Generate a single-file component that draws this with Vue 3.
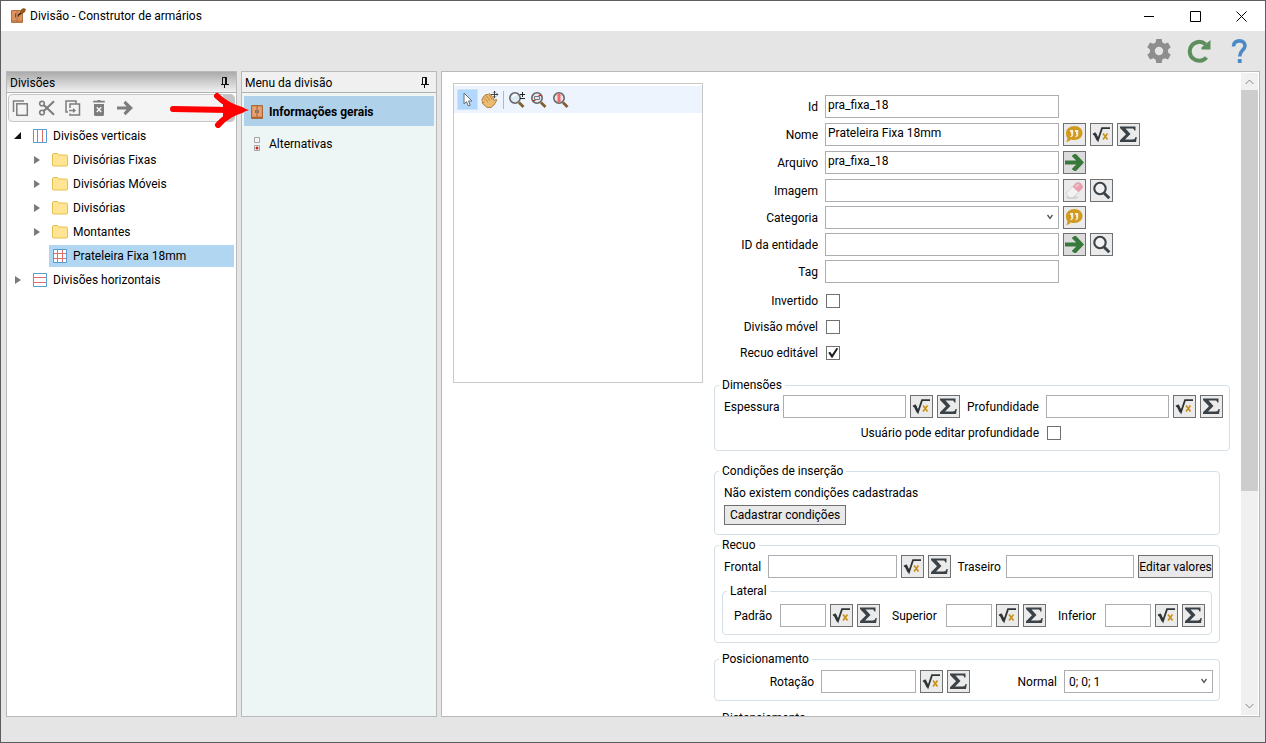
<script setup>
import { ref } from 'vue'

const folders = ['Divisórias Fixas', 'Divisórias Móveis', 'Divisórias', 'Montantes']

const topFields = ref([
  { id: 'id', label: 'Id', value: 'pra_fixa_18', actions: [] },
  { id: 'nome', label: 'Nome', value: 'Prateleira Fixa 18mm', actions: ['quote', 'fx', 'sum'] },
  { id: 'arquivo', label: 'Arquivo', value: 'pra_fixa_18', actions: ['go'] },
  { id: 'imagem', label: 'Imagem', value: '', actions: ['eraser', 'search'] },
])
const bottomFields = ref([
  { id: 'categoria', label: 'Categoria', value: '', select: true, actions: ['quote'] },
  { id: 'entidade', label: 'ID da entidade', value: '', actions: ['go', 'search'] },
  { id: 'tag', label: 'Tag', value: '', actions: [] },
])
const checks = ref([
  { id: 'invertido', label: 'Invertido', on: false },
  { id: 'movel', label: 'Divisão móvel', on: false },
  { id: 'recuo', label: 'Recuo editável', on: true },
])
const names = {
  quote: 'Tradução',
  fx: 'Fórmula',
  sum: 'Somatório',
  go: 'Abrir',
  eraser: 'Limpar',
  search: 'Pesquisar',
}
const treeTools = ['copy', 'cut', 'paste', 'trash', 'arrow']
const treeToolNames = ['Copiar', 'Recortar', 'Colar', 'Excluir', 'Avançar']
const editDepth = ref(false)
</script>

<template>
  <div class="window">
    <svg class="defs" aria-hidden="true">
      <symbol id="i-quote" viewBox="0 0 21 21">
        <path d="M10.5 2C15 2 18.500 5 18.500 9S15 16 10.500 16C9 16 7.800 15.800 6.800 15.400C5.500 16.800 4 17.800 2 18C3 17 3.400 15.800 3.400 14C2.400 12.600 2 11 2 9C2 5 6 2 10.500 2Z" fill="#d29a1e" />
        <path d="M6 6H9.200V10.500C9.200 12 8.300 13 6.500 13.300V12C7.300 11.800 7.600 11.300 7.600 10.300H7V8H6ZM11 6H14.200V10.500C14.200 12 13.300 13 11.500 13.300V12C12.300 11.800 12.600 11.300 12.600 10.300H12V8H11Z" fill="#f6efdc" />
      </symbol>
      <symbol id="i-fx" viewBox="0 0 21 21">
        <path d="M2 10.500l2-1 3 6.500L11 4.200h8" fill="none" stroke="#2f3437" stroke-width="1.800" />
        <path d="M3.800 9.600l3 6.400" stroke="#2f3437" stroke-width="2.600" />
        <path d="M12 9.500l4.500 6M16.500 9.500l-4.500 6" stroke="#c8921a" stroke-width="1.700" />
      </symbol>
      <symbol id="i-sum" viewBox="0 0 21 21">
        <path d="M2 2.500H17.500V6.500H16.300C16 5 15.400 4.500 14 4.500H7.500L12.500 10L7 15.500H14.500C16.300 15.500 17 14.800 17.500 13H18.800L18 18H2V16.300L8 10.300L2 4Z" fill="#3b4349" />
      </symbol>
      <symbol id="i-go" viewBox="0 0 21 21">
        <path d="M1 8.400H12.200L7.700 4L10.300 2H12L20 10.500L12 19H10.300L7.700 17L12.200 12.600H1Z" fill="#37793a" />
      </symbol>
      <symbol id="i-eraser" viewBox="0 0 21 21">
        <ellipse cx="8" cy="17.500" rx="6.500" ry="1.500" fill="#cfcfcf" />
        <path d="M3 12L12 3.300C13.500 2 15 2 16.500 3.300L18 5C19 6.300 19 7.500 18 8.700L9.500 17C8 18.200 6.500 18 5 17L3.400 15.500C2.300 14.500 2.200 13 3 12Z" fill="#f2f2f2" stroke="#c9c6c7" stroke-width=".7" />
        <path d="M8.500 6.700L12 3.300C13.500 2 15 2 16.500 3.300L18 5C19 6.300 19 7.500 18 8.700L14.400 12.200Z" fill="#eaa0ae" />
        <path d="M11 6.500l2.500-2.400 2 .3-3 3.200Z" fill="#f5c5cc" />
      </symbol>
      <symbol id="i-search" viewBox="0 0 21 21">
        <circle cx="9" cy="8.500" r="5.700" fill="#f1f1f1" stroke="#3b4349" stroke-width="2.100" />
        <path d="M13 13l5.300 5.200" stroke="#3b4349" stroke-width="3" />
      </symbol>
      <symbol id="i-copy" viewBox="0 0 18 18">
        <path d="M1.500 13V2H12" fill="none" stroke="#7d7d7d" stroke-width="1.500" />
        <rect x="4.800" y="4.800" width="10.500" height="11.500" fill="none" stroke="#7d7d7d" stroke-width="1.500" />
      </symbol>
      <symbol id="i-cut" viewBox="0 0 18 18">
        <circle cx="4" cy="4.500" r="2.300" fill="none" stroke="#7d7d7d" stroke-width="1.600" />
        <circle cx="4" cy="13.500" r="2.300" fill="none" stroke="#7d7d7d" stroke-width="1.600" />
        <path d="M5.500 5.800L16 15.800M5.500 12.200L16 2.200" stroke="#7d7d7d" stroke-width="2.100" />
      </symbol>
      <symbol id="i-paste" viewBox="0 0 18 18">
        <path d="M4 13H2V2H12V4.500M6 9V5H15.500V16H6V14.500M5 11.500H10" fill="none" stroke="#7d7d7d" stroke-width="1.500" />
        <path d="M9 9l3 2.500-3 2.500Z" fill="#7d7d7d" />
      </symbol>
      <symbol id="i-trash" viewBox="0 0 18 18">
        <path d="M3.200 1.700H7L8 1H10L11 1.700H14.800V3.500H3.200ZM4 5H14V15.500Q14 17 12.500 17H5.500Q4 17 4 15.500Z" fill="#7d7d7d" />
        <path d="M6.800 8.200l4.400 4.800M11.200 8.200l-4.400 4.800" stroke="#f4f4f4" stroke-width="1.500" />
      </symbol>
      <symbol id="i-arrow" viewBox="0 0 18 18">
        <path d="M1 7.500H10.500L7.500 4L9.500 1.800L17 9L9.500 16.200L7.500 14L10.500 10.500H1Z" fill="#7d7d7d" />
      </symbol>
      <symbol id="i-pin" viewBox="0 0 8 11">
        <path d="M1.500 7V.5H5.500V7M0 7.500H8M3.500 8V11" fill="none" stroke="#111" />
        <path d="M5 .5V7" stroke="#111" stroke-width="2" />
      </symbol>
      <symbol id="i-folder" viewBox="0 0 16 14">
        <path d="M.5 2Q.5 .5 2 .5H5.500L7 2H14Q15.500 2 15.500 3.500V12Q15.500 13 14.500 13H1.500Q.5 13 .5 12Z" fill="#ffe593" stroke="#e6bf50" />
      </symbol>
      <symbol id="i-cabinet" viewBox="0 0 12 14">
        <path d="M.5 .5H11.500V13.500H.5Z" fill="#d98d58" stroke="#a9693a" />
        <path d="M1.500 2H5.500V11H1.500ZM6.500 2H10.500V11H6.500Z" fill="#e8a070" />
        <path d="M6 1V12M0 12.500H12" stroke="#9c6036" stroke-width=".8" />
        <path d="M4.800 5v3M7.200 5v3" stroke="#4f6470" stroke-width="1" />
      </symbol>
    </svg>

    <header class="titlebar">
      <svg class="app-icon" viewBox="0 0 16 16">
        <path d="M1.500 2.500H12.500V14.500H1.500Z" fill="#dd935f" stroke="#b8743f" />
        <path d="M7 3V14M1 13H13" stroke="#a9673a" stroke-width=".8" />
        <path d="M5.500 5.500v4M8.500 6v3" stroke="#675548" stroke-width="1.100" />
        <path d="M9 6.500L11.500 1L14 0L16 1.500L15 4L11.500 6.500Z" fill="#97581b" />
        <path d="M8 7.500l3-2.500" stroke="#302218" stroke-width="1.300" />
      </svg>
      <h1>Divisão - Construtor de armários</h1>
      <nav class="caption">
        <button aria-label="Minimizar"><svg viewBox="0 0 11 11"><path d="M0 5.500H10" /></svg></button>
        <button aria-label="Maximizar"><svg viewBox="0 0 11 11"><path d="M.5 .5H10.500V10.500H.5Z" /></svg></button>
        <button aria-label="Fechar"><svg viewBox="0 0 11 11"><path d="M.5 .5L10.500 10.500M10.500 .5L.5 10.500" /></svg></button>
      </nav>
    </header>

    <div class="commands">
      <button aria-label="Configurações">
        <svg viewBox="0 0 24 24"><path fill="#8e8e8e" fill-rule="evenodd" d="M9.300 0H14.700L15.400 3.400L17.700 4.700L21 3.600L23.700 8.300L21.100 10.600V13.400L23.700 15.700L21 20.400L17.700 19.300L15.400 20.600L14.700 24H9.300L8.600 20.600L6.300 19.300L3 20.400L.3 15.700L2.900 13.400V10.600L.3 8.300L3 3.600L6.300 4.700L8.600 3.400ZM12 7.800A4.200 4.200 0 1 0 12 16.200A4.200 4.200 0 1 0 12 7.800Z" /></svg>
      </button>
      <button aria-label="Atualizar">
        <svg viewBox="0 0 24 24">
          <path d="M19.500 18.500A9.500 9.500 0 1 1 18.500 5.200" fill="none" stroke="#5c8f5c" stroke-width="4" />
          <path d="M23.500 1V10.500H14.500V8.500Z" fill="#5c8f5c" />
        </svg>
      </button>
      <button aria-label="Ajuda">
        <svg viewBox="0 0 24 24">
          <path d="M6.500 7.500C6.500 3.500 9 1.900 12.500 1.900C16 1.900 18 4 18 6.700C18 11 12.700 11.500 12.700 17.500" fill="none" stroke="#4a8ac6" stroke-width="3.600" />
          <path d="M10.800 20H14.600V24H10.800Z" fill="#4a8ac6" />
        </svg>
      </button>
    </div>

    <main class="panels">
      <section class="panel tree-panel">
        <div class="panel-head active">
          <h2>Divisões</h2>
          <svg class="pin"><use href="#i-pin" /></svg>
        </div>
        <div class="tree-tools">
          <button v-for="(t, i) in treeTools" :key="t" :aria-label="treeToolNames[i]">
            <svg><use :href="'#i-' + t" /></svg>
          </button>
          <span class="overflow"></span>
        </div>
        <ul class="tree">
          <li>
            <div class="node">
              <svg class="twist" viewBox="0 0 8 8"><path d="M7 0V7H0Z" fill="#111" /></svg>
              <svg class="grid-icon" viewBox="0 0 14 14"><path d="M4.500 1V13M9.500 1V13" stroke="#e06c6c" /><path d="M.5 .5H13.500V13.500H.5Z" fill="none" stroke="#5a9bd0" /></svg>
              <span>Divisões verticais</span>
            </div>
            <ul>
              <li v-for="f in folders" :key="f" class="node">
                <svg class="twist" viewBox="0 0 8 8"><path d="M1 0L7 4L1 8Z" fill="#7a7a7a" /></svg>
                <svg class="folder"><use href="#i-folder" /></svg>
                <span>{{ f }}</span>
              </li>
              <li class="node selected">
                <svg class="grid-icon" viewBox="0 0 14 14"><path d="M.5 .5H13.500V13.500H.5Z" fill="#fff" stroke="#5a9bd0" /><path d="M4.500 1V13M9.500 1V13M1 4.500H13M1 9.500H13" stroke="#e06c6c" /></svg>
                <span>Prateleira Fixa 18mm</span>
              </li>
            </ul>
          </li>
          <li class="node">
            <svg class="twist" viewBox="0 0 8 8"><path d="M1 0L7 4L1 8Z" fill="#7a7a7a" /></svg>
            <svg class="grid-icon" viewBox="0 0 14 14"><path d="M1 4.500H13M1 9.500H13" stroke="#e06c6c" /><path d="M.5 .5H13.500V13.500H.5Z" fill="none" stroke="#5a9bd0" /></svg>
            <span>Divisões horizontais</span>
          </li>
        </ul>
      </section>

      <section class="panel menu-panel">
        <div class="panel-head">
          <h2>Menu da divisão</h2>
          <svg class="pin"><use href="#i-pin" /></svg>
        </div>
        <nav class="menu">
          <button class="current"><svg><use href="#i-cabinet" /></svg>Informações gerais</button>
          <button>
            <svg viewBox="0 0 12 14"><path d="M3.500 .5H8.500V5.500H3.500ZM3.500 8.500H8.500V13.500H3.500Z" fill="#f4f4f4" stroke="#a5a5a5" /><circle cx="6" cy="11" r="1.500" fill="#c22626" /></svg>Alternativas
          </button>
        </nav>
      </section>

      <section class="panel content-panel">
        <div class="content">
          <div class="preview">
            <div class="preview-tools">
              <button class="on" aria-label="Selecionar">
                <svg viewBox="0 0 18 18"><path d="M5 2V13L7.500 10.700L9.300 15L11.300 14.200L9.500 10H13Z" fill="#fff" stroke="#66707c" /></svg>
              </button>
              <button aria-label="Mover">
                <svg viewBox="0 0 18 18">
                  <path d="M1 8L3 5L5 3.500L7 3.500L8 2.500L10 4L12 6.500L13 9.500L15 8.500L16 9L13 14L10 16.500H6L3 14L1 11.500L2.500 11.500L1 9.500Z" fill="#ebbc70" stroke="#a36d25" stroke-width=".8" />
                  <path d="M3 6.500l4 4.500M5 4.500l4 5M8 3.500l3 5" stroke="#b47c32" stroke-width=".8" />
                  <path d="M13.500 0V7M10 3.500H17M12.300 1.500L13.500 .3L14.700 1.500M12.300 5.500L13.500 6.700L14.700 5.500M15.700 2.300L16.900 3.500L15.700 4.700" fill="none" stroke="#333" stroke-width=".9" />
                </svg>
              </button>
              <i></i>
              <button aria-label="Zoom">
                <svg viewBox="0 0 18 18">
                  <path d="M11 11.500L15.500 16" stroke="#80602e" stroke-width="2.800" />
                  <circle cx="7" cy="7" r="5.200" fill="#dcebf0" stroke="#666" stroke-width="1.600" />
                  <path d="M4.500 6Q6 3.500 8.500 4" fill="none" stroke="#fff" stroke-width="1.500" />
                  <path d="M14.500 1V6M12 3.500H17M12 7.500H17" stroke="#222" />
                </svg>
              </button>
              <button aria-label="Zoom na área">
                <svg viewBox="0 0 18 18">
                  <path d="M11 11.500L15.500 16" stroke="#80602e" stroke-width="2.800" />
                  <circle cx="7" cy="7" r="5.200" fill="#e6eaf0" stroke="#666" stroke-width="1.600" />
                  <path d="M4.500 5.500H9.500V8.500H4.500Z" fill="none" stroke="#777" />
                  <path d="M8.500 4.500h2.500M2.500 9.500h3" stroke="#d22" stroke-width="1.200" />
                </svg>
              </button>
              <button aria-label="Ajustar zoom">
                <svg viewBox="0 0 18 18">
                  <path d="M11 11.500L15.500 16" stroke="#80602e" stroke-width="2.800" />
                  <circle cx="7" cy="7" r="5.200" fill="#e6eaf0" stroke="#666" stroke-width="1.600" />
                  <path d="M7 2L9.500 4.500H8.500V9.500H9.500L7 12L4.500 9.500H5.500V4.500H4.500Z" fill="#f76666" />
                </svg>
              </button>
            </div>
          </div>

          <form class="form" @submit.prevent>
            <div class="rows loose">
              <div v-for="f in topFields" :key="f.id" class="field">
                <label :for="f.id">{{ f.label }}</label>
                <input :id="f.id" v-model="f.value" type="text" />
                <div class="acts">
                  <button v-for="a in f.actions" :key="a" class="ib" :class="a" :aria-label="names[a]"><svg><use :href="'#i-' + a" /></svg></button>
                </div>
              </div>
            </div>
            <div class="rows tight">
              <div v-for="f in bottomFields" :key="f.id" class="field">
                <label :for="f.id">{{ f.label }}</label>
                <div v-if="f.select" class="pick">
                  <select :id="f.id"><option></option></select>
                  <svg viewBox="0 0 8 6"><path d="M1.500 1L4 4.500L6.500 1" /></svg>
                </div>
                <input v-else :id="f.id" v-model="f.value" type="text" />
                <div class="acts">
                  <button v-for="a in f.actions" :key="a" class="ib" :class="a" :aria-label="names[a]"><svg><use :href="'#i-' + a" /></svg></button>
                </div>
              </div>
            </div>
            <div class="checks">
              <div v-for="c in checks" :key="c.id" class="field">
                <label :for="c.id">{{ c.label }}</label>
                <input :id="c.id" v-model="c.on" type="checkbox" />
              </div>
            </div>

            <fieldset class="dimensions">
              <legend>Dimensões</legend>
              <div class="line">
                <label class="w-label" for="esp">Espessura</label>
                <input id="esp" type="text" />
                <button class="ib" aria-label="Fórmula"><svg><use href="#i-fx" /></svg></button>
                <button class="ib" aria-label="Somatório"><svg><use href="#i-sum" /></svg></button>
                <label class="w-depth" for="prof">Profundidade</label>
                <input id="prof" type="text" />
                <button class="ib" aria-label="Fórmula"><svg><use href="#i-fx" /></svg></button>
                <button class="ib" aria-label="Somatório"><svg><use href="#i-sum" /></svg></button>
              </div>
              <div class="line depth-check">
                <label for="editdepth">Usuário pode editar profundidade</label>
                <input id="editdepth" v-model="editDepth" type="checkbox" />
              </div>
            </fieldset>

            <fieldset class="narrow conditions">
              <legend>Condições de inserção</legend>
              <p>Não existem condições cadastradas</p>
              <button class="tb">Cadastrar condições</button>
            </fieldset>

            <fieldset class="narrow setback">
              <legend>Recuo</legend>
              <div class="line">
                <label class="w-front" for="frontal">Frontal</label>
                <input id="frontal" type="text" />
                <button class="ib" aria-label="Fórmula"><svg><use href="#i-fx" /></svg></button>
                <button class="ib" aria-label="Somatório"><svg><use href="#i-sum" /></svg></button>
                <label class="w-back" for="traseiro">Traseiro</label>
                <input id="traseiro" type="text" />
                <button class="tb fit">Editar valores</button>
              </div>
              <fieldset class="lateral">
                <legend>Lateral</legend>
                <div class="line">
                  <template v-for="l in ['Padrão', 'Superior', 'Inferior']" :key="l">
                    <label :for="'lat-' + l" :class="'l-' + l.slice(0, 3).toLowerCase()">{{ l }}</label>
                    <input :id="'lat-' + l" type="text" />
                    <button class="ib" aria-label="Fórmula"><svg><use href="#i-fx" /></svg></button>
                    <button class="ib" aria-label="Somatório"><svg><use href="#i-sum" /></svg></button>
                  </template>
                </div>
              </fieldset>
            </fieldset>

            <fieldset class="narrow position">
              <legend>Posicionamento</legend>
              <div class="line">
                <label class="w-rot" for="rotacao">Rotação</label>
                <input id="rotacao" type="text" />
                <button class="ib" aria-label="Fórmula"><svg><use href="#i-fx" /></svg></button>
                <button class="ib" aria-label="Somatório"><svg><use href="#i-sum" /></svg></button>
                <label class="w-normal" for="normal">Normal</label>
                <div class="pick">
                  <select id="normal"><option>0; 0; 1</option></select>
                  <svg viewBox="0 0 8 6"><path d="M1.500 1L4 4.500L6.500 1" /></svg>
                </div>
              </div>
            </fieldset>

            <fieldset class="narrow distance">
              <legend>Distanciamento</legend>
            </fieldset>
          </form>
        </div>
        <div class="scrollbar" aria-hidden="true">
          <svg viewBox="0 0 9 6"><path d="M.7 5L4.500 1L8.300 5" /></svg>
          <div class="track"><div class="thumb"></div></div>
          <svg viewBox="0 0 9 6"><path d="M.7 1L4.500 5L8.300 1" /></svg>
        </div>
      </section>
    </main>

    <svg class="pointer" viewBox="0 0 80 36" aria-hidden="true">
      <path d="M4 17L60 18" stroke="#fe0000" stroke-width="6" stroke-linecap="round" />
      <path d="M48 4C54 10 63 15 73 18C63 21 55 26 49 33" fill="none" stroke="#fe0000" stroke-width="6" stroke-linecap="round" stroke-linejoin="round" />
      <path d="M54 10L80 18L54 27Z" fill="#fe0000" />
    </svg>
  </div>
</template>

<style>
html,
body,
#app {
  height: 100%;
}
</style>

<style scoped>
* {
  box-sizing: border-box;
}
.window {
  position: relative;
  display: flex;
  flex-direction: column;
  height: 100%;
  border: 1px solid #5c5c61;
  background: #e5e5e5;
  color: #000;
  font: 12px/16px "Segoe UI", Roboto, "Open Sans", sans-serif;
  overflow: hidden;
}
.defs {
  position: absolute;
  width: 0;
  height: 0;
}
button,
input,
select {
  font: inherit;
  color: inherit;
  margin: 0;
  padding: 0;
  border-radius: 0;
}
button {
  border: 0;
  background: none;
}
svg {
  display: block;
  flex: none;
}
h1,
h2,
p {
  margin: 0;
  font: inherit;
}
ul {
  list-style: none;
  margin: 0;
  padding: 0;
}

.titlebar {
  display: flex;
  align-items: center;
  flex: none;
  height: 30px;
  padding: 0 1px 0 9px;
  background: #fff;
}
.app-icon {
  width: 16px;
  height: 16px;
  margin-right: 4px;
}
.caption {
  display: flex;
  margin-left: auto;
}
.caption button {
  width: 46px;
  height: 28px;
  display: grid;
  place-items: center;
}
.caption svg {
  width: 11px;
  height: 11px;
  fill: none;
  stroke: #000;
}
.commands {
  display: flex;
  justify-content: flex-end;
  align-items: center;
  flex: none;
  gap: 16px;
  height: 40px;
  padding-right: 14px;
}
.commands svg {
  width: 24px;
  height: 24px;
}

.panels {
  display: flex;
  flex: 1;
  min-height: 0;
  gap: 4px;
  padding: 0 5px 25px;
}
.panel {
  display: flex;
  flex-direction: column;
  flex: none;
  border: 1px solid #b9b9bb;
  background: #fff;
}
.tree-panel {
  width: 231px;
}
.menu-panel {
  width: 196px;
  background: #edf5f5;
}
.content-panel {
  flex: 1;
  flex-direction: row;
  min-width: 0;
}
.panel-head {
  display: flex;
  justify-content: space-between;
  align-items: center;
  height: 21px;
  padding: 1px 7px 0 3px;
  border-bottom: 1px solid #b0b0b0;
  background: #f0f0f0;
}
.panel-head.active {
  background: linear-gradient(#ababab, #f0f0f0);
}
.pin {
  width: 8px;
  height: 11px;
}

.tree-tools {
  display: flex;
  align-items: center;
  gap: 8px;
  height: 28px;
  margin: 1px;
  padding-left: 3px;
  border: 1px solid #c6c6c6;
  border-radius: 4px;
  background: #f4f4f4;
  overflow: hidden;
}
.tree-tools svg {
  width: 18px;
  height: 18px;
}
.overflow {
  align-self: stretch;
  width: 11px;
  margin-left: auto;
  background: #c4c4c4;
}
.tree {
  padding-top: 2px;
}
.node {
  display: flex;
  align-items: center;
  height: 22px;
  margin: 0 2px 2px 0;
  padding-left: 7px;
}
.twist {
  width: 8px;
  height: 8px;
  margin-right: 11px;
}
.grid-icon {
  width: 14px;
  height: 14px;
  margin-right: 6px;
}
.folder {
  width: 16px;
  height: 14px;
  margin-right: 5px;
}
.tree ul .node {
  padding-left: 26px;
}
.tree ul .selected {
  margin-left: 42px;
  padding-left: 4px;
  background: #b1d6f2;
}

.menu {
  display: flex;
  flex-direction: column;
  gap: 2px;
  padding: 3px 2px;
}
.menu button {
  display: flex;
  align-items: center;
  gap: 6px;
  height: 30px;
  padding: 1px 0 0 7px;
  text-align: left;
}
.menu .current {
  background: #afd1ea;
  font-weight: 700;
}
.menu svg {
  width: 12px;
  height: 14px;
}

.content {
  display: flex;
  align-items: flex-start;
  flex: 1;
  gap: 11px;
  min-width: 0;
  padding: 11px 11px 0;
  overflow: hidden;
}
.preview {
  flex: none;
  width: 250px;
  height: 300px;
  padding-top: 2px;
  border: 1px solid #c9c9c9;
}
.preview-tools {
  display: flex;
  align-items: center;
  gap: 1px;
  height: 27px;
  padding-left: 3px;
  background: #edf4fd;
}
.preview-tools button {
  display: grid;
  place-items: center;
  width: 21px;
  height: 21px;
}
.preview-tools .on {
  border: 1px solid #cfe3f8;
  background: #b3d8fd;
}
.preview-tools i {
  width: 1px;
  height: 18px;
  margin: 0 1px 0 2px;
  background: #b5b9be;
}
.preview-tools svg {
  width: 18px;
  height: 18px;
}

.form {
  flex: 1;
  min-width: 0;
  padding-top: 12px;
}
.rows {
  display: grid;
}
.loose {
  gap: 5px;
}
.tight {
  gap: 4px;
  margin-top: 4px;
}
.field {
  display: grid;
  grid-template-columns: 104px minmax(0, 234px) auto;
  column-gap: 7px;
  align-items: center;
}
.field label {
  text-align: right;
}
.acts {
  display: flex;
  gap: 4px;
  margin-left: -3px;
}
.checks {
  display: grid;
  gap: 10px;
  margin: 10px 0 16px;
}
input[type='text'],
select {
  width: 100%;
  min-width: 0;
  height: 23px;
  border: 1px solid #abadb3;
  background: #fff;
  outline: 0;
}
input[type='text'] {
  padding: 0 2px 4px;
}
input[type='checkbox'] {
  appearance: none;
  flex: none;
  width: 14px;
  height: 14px;
  margin-left: 1px;
  border: 1px solid #707070;
  background: #fff;
}
input[type='checkbox']:checked::before {
  content: '';
  display: block;
  width: 12px;
  height: 12px;
  background: #212121;
  clip-path: polygon(10% 48%, 26% 40%, 42% 62%, 78% 8%, 94% 12%, 46% 90%, 38% 90%);
}
.pick {
  position: relative;
}
.pick select {
  appearance: none;
  padding: 0 4px;
}
.pick svg {
  position: absolute;
  top: 8px;
  right: 5px;
  width: 8px;
  height: 6px;
  fill: none;
  stroke: #555;
  stroke-width: 1.3;
  pointer-events: none;
}
.ib {
  display: grid;
  place-items: center;
  flex: none;
  width: 23px;
  height: 23px;
  border: 1px solid #707070;
  background: #ebebeb;
}
.ib.go {
  background: #dcdcdc;
}
.ib svg {
  width: 21px;
  height: 21px;
}
.tb {
  flex: none;
  height: 20px;
  padding: 0 5px;
  border: 1px solid #707070;
  background: #e9e9e9;
  line-height: 18px;
}
.tb.fit {
  width: 75px;
  height: 23px;
  padding: 0;
  white-space: nowrap;
}

fieldset {
  min-width: 0;
  margin: 0;
  padding: 2px 6px 0 4px;
  border: 1px solid #d5dfe5;
  border-radius: 4px;
}
.narrow {
  margin-right: 10px;
}
legend {
  padding: 0 3px;
}
.line {
  display: flex;
  align-items: center;
  gap: 4px;
  padding-left: 5px;
}
.line > label,
.line > input,
.line > .pick {
  flex: none;
}
.line > input[type='text'],
.line > .pick {
  flex: 1;
}
.line > label {
  white-space: nowrap;
}
.dimensions {
  padding-bottom: 9px;
}
.w-label {
  width: 55px;
}
.w-depth {
  width: 78px;
  margin-left: 3px;
  margin-right: -3px;
}
.depth-check {
  justify-content: flex-end;
  margin-top: 7px;
  padding-right: 162px;
}
.depth-check input {
  margin-left: 4px;
}
.conditions {
  margin-top: 12px;
  padding-bottom: 9px;
}
.conditions p {
  margin: 4px 5px;
}
.conditions .tb {
  display: block;
  margin-left: 5px;
}
.setback {
  margin-top: 2px;
  padding-bottom: 7px;
}
.w-front {
  width: 40px;
}
.w-back {
  width: 44px;
  margin-left: 3px;
}
.lateral {
  margin: 5px 1px 0 3px;
  padding: 5px 6px 7px 4px;
}
.lateral .line {
  padding-left: 7px;
}
.l-pad {
  width: 42px;
}
.l-sup {
  width: 50px;
  margin-left: 8px;
}
.l-inf {
  width: 43px;
  margin-left: 8px;
}
.position {
  margin-top: 8px;
  padding-top: 3px;
  padding-bottom: 7px;
}
.w-rot {
  width: 90px;
  margin-right: 3px;
  text-align: right;
}
.position .line > input {
  flex: 0 1 95px;
}
.w-normal {
  margin-left: auto;
  margin-right: 3px;
}
.position .line > .pick {
  flex: 0 1 149px;
}
.distance {
  margin-top: 9px;
  padding-bottom: 40px;
}

.scrollbar {
  display: flex;
  flex-direction: column;
  align-items: center;
  flex: none;
  width: 17px;
  margin: 1px 1px 1px 0;
  padding: 6px 0;
  background: #f0f0f0;
}
.scrollbar svg {
  width: 9px;
  height: 6px;
  fill: none;
  stroke: #888;
}
.track {
  flex: 1;
  align-self: stretch;
  margin: 5px 0;
}
.thumb {
  height: 66%;
  background: #cdcdcd;
}

.pointer {
  position: absolute;
  left: 168px;
  top: 91px;
  width: 80px;
  height: 36px;
}
</style>
